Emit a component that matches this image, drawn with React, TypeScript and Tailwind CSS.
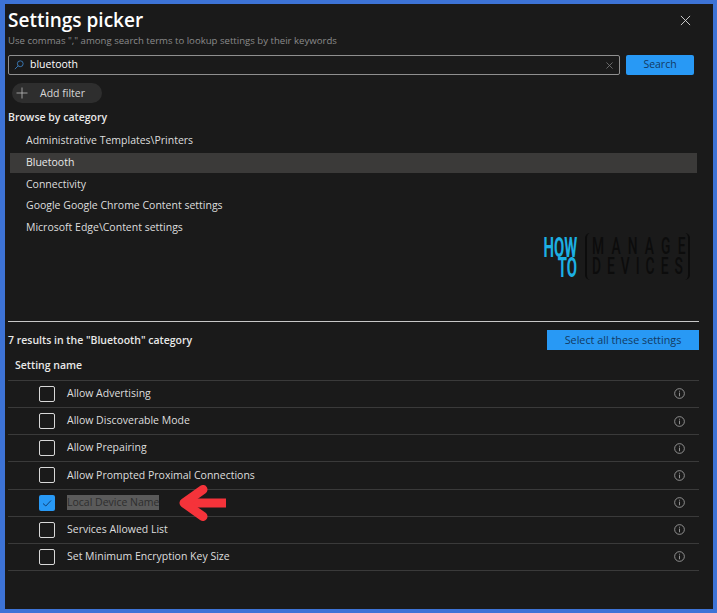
const rows = [
  "Allow Advertising",
  "Allow Discoverable Mode",
  "Allow Prepairing",
  "Allow Prompted Proximal Connections",
  "Local Device Name",
  "Services Allowed List",
  "Set Minimum Encryption Key Size",
];

const categories = [
  "Administrative Templates\\Printers",
  "Bluetooth",
  "Connectivity",
  "Google Google Chrome Content settings",
  "Microsoft Edge\\Content settings",
];

function Logo() {
  return (
    <div className="flex items-center gap-[8px] font-['Roboto',sans-serif]">
      <div className="mt-[4px] flex w-[35px] flex-col items-end whitespace-nowrap text-[27px] font-bold leading-[20px] text-[#1cb0e4]">
        <span className="origin-right [transform:scaleX(0.55)]">HOW</span>
        <span className="origin-right [transform:scaleX(0.55)]">TO</span>
      </div>
      <div className="flex h-[47px] w-[105px] flex-col justify-center whitespace-nowrap rounded-[5px] border-x-2 border-[#0c0c0c] pl-[5px] pt-[2px] text-[23px] font-medium leading-[20px] text-[#0c0c0c]">
        <span className="origin-left tracking-[12px] [transform:scaleX(0.6)]">MANAGE</span>
        <span className="origin-left tracking-[10px] [transform:scaleX(0.6)]">DEVICES</span>
      </div>
    </div>
  );
}

function Row({ name }: { name: string }) {
  const checked = name === "Local Device Name";
  return (
    <div className="flex h-[27.2px] items-center border-b border-[#3a3a3a] pl-[31px] pr-[14px]">
      <div
        className={
          checked
            ? "flex h-4 w-4 shrink-0 items-center justify-center rounded-[2px] bg-[#2899f5]"
            : "h-4 w-4 shrink-0 rounded-[2px] border border-[#d8d8d8]"
        }
      >
        {checked && (
          <svg viewBox="0 0 12 12" className="h-3 w-3" fill="none" stroke="#0f3f73" strokeWidth="1">
            <path d="M2 6.5 L4.8 9 L10 3.5" />
          </svg>
        )}
      </div>
      <span className={checked ? "ml-[12px] bg-[#5a5a5a] text-[#2e2e2e]" : "ml-[12px] text-[#dedede]"}>{name}</span>
      {checked && (
        <svg viewBox="0 0 48 36" className="ml-[20px] h-[36px] w-[48px] shrink-0" fill="none" stroke="#f5333a" strokeLinejoin="round">
          <path d="M47 18 H6" strokeWidth="9" />
          <path d="M24 4.5 L5 18 L24 31.5" strokeWidth="9" strokeLinecap="round" />
        </svg>
      )}
      <svg viewBox="0 0 12 12" className="ml-auto h-[11px] w-[11px] shrink-0" fill="none" stroke="#a8a8a8" strokeWidth="0.9">
        <circle cx="6" cy="6" r="5.3" />
        <path d="M6 5 V9 M6 3 V4" />
      </svg>
    </div>
  );
}

export default function App() {
  return (
    <div className="h-[613px] w-[717px] border-4 border-l-[5px] border-[#3d73d6] bg-[#1a1a1a] font-['Open_Sans','Noto_Sans',sans-serif] text-[10.5px] text-[#dedede]">
      <div className="flex h-full flex-col pl-[3px] pr-[14px]">
        <div className="flex items-start justify-between pt-[2px]">
          <h1 className="text-[19px] font-semibold leading-[28px] text-white">Settings picker</h1>
          <svg viewBox="0 0 12 12" className="mr-[8px] mt-[9px] h-[11px] w-[11px]" fill="none" stroke="#d8d8d8" strokeWidth="1">
            <path d="M1 1 L11 11 M11 1 L1 11" />
          </svg>
        </div>
        <p className="text-[9.6px] leading-[14px] text-[#8a8a8a]">Use commas "," among search terms to lookup settings by their keywords</p>
        <div className="mr-[5px] mt-[7px] flex gap-[6px]">
          <div className="flex h-[20px] flex-1 items-center rounded-[2px] border border-[#8f8f8f] pl-[5px] pr-[6px]">
            <svg viewBox="0 0 12 12" className="h-[10px] w-[10px]" fill="none" stroke="#3f84c8" strokeWidth="1">
              <circle cx="7.5" cy="4.5" r="3.5" />
              <path d="M5 7 L1 11" />
            </svg>
            <span className="ml-[6px] text-white">bluetooth</span>
            <svg viewBox="0 0 8 8" className="ml-auto h-[7px] w-[7px]" fill="none" stroke="#7d7d7d" strokeWidth="0.9">
              <path d="M0.5 0.5 L7.5 7.5 M7.5 0.5 L0.5 7.5" />
            </svg>
          </div>
          <button className="h-[20px] w-[68px] rounded-[2px] bg-[#2899f5] text-[#123a63]">Search</button>
        </div>
        <button className="ml-[4px] mt-[8px] flex h-[20px] w-[90px] items-center rounded-[10px] bg-[#2e2e2e] pl-[4px] text-[#d8d8d8]">
          <svg viewBox="0 0 12 12" className="h-[12px] w-[12px]" fill="none" stroke="#bdbdbd" strokeWidth="0.8">
            <path d="M6 0.5 V11.5 M0.5 6 H11.5" />
          </svg>
          <span className="ml-[12px] pt-[2px]">Add filter</span>
        </button>
        <h2 className="mt-[6px] font-semibold leading-[16px] text-[#e8e8e8]">Browse by category</h2>
        <div className="ml-[2px] mr-[2px] mt-[6px] flex flex-col gap-[1.7px]">
          {categories.map((c) => (
            <div
              key={c}
              className={
                c === "Bluetooth"
                  ? "flex h-5 items-center bg-[#3b3a39] pl-[16px] text-[#e8e8e8]"
                  : "flex h-5 items-center pl-[16px]"
              }
            >
              {c}
            </div>
          ))}
        </div>
        <div className="mr-[9px] mt-[-5px] flex justify-end">
          <Logo />
        </div>
        <div className="mt-[41px] border-t border-[#c8c8c8]" />
        <div className="mt-[8px] flex items-center justify-between">
          <span className="pt-[2px] font-semibold text-[#e8e8e8]">7 results in the "Bluetooth" category</span>
          <button className="h-[20px] w-[152px] bg-[#2899f5] text-[10.8px] text-[#123a63]">Select all these settings</button>
        </div>
        <div className="flex h-[31px] items-center border-b border-[#3a3a3a] pl-[7px] pt-[2px] font-semibold text-[#e8e8e8]">Setting name</div>
        <div className="flex flex-col">
          {rows.map((r) => (
            <Row key={r} name={r} />
          ))}
        </div>
      </div>
    </div>
  );
}
